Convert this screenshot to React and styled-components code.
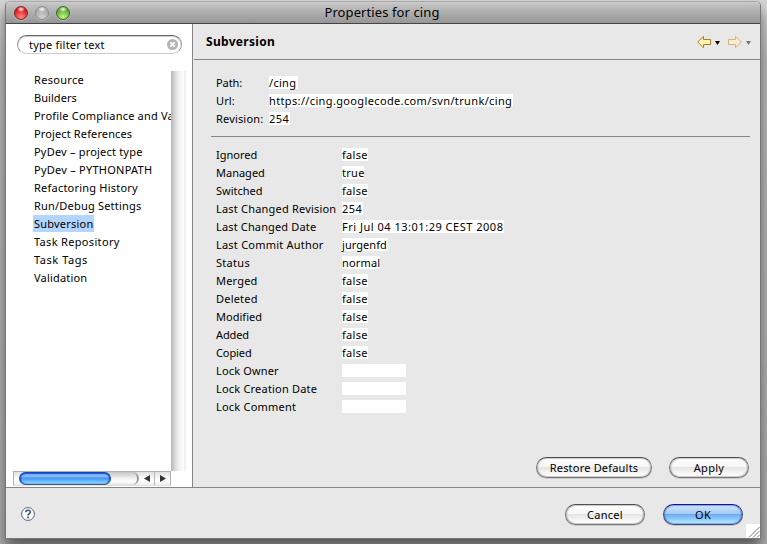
import React from "react";
import styled, { createGlobalStyle, css } from "styled-components";

const Global = createGlobalStyle`
  * { box-sizing: border-box; }
  html, body { margin: 0; padding: 0; overflow: hidden; }
  body { font: 11px/18px "Noto Sans", "Open Sans", sans-serif; color: #000; }
`;

const Desktop = styled.div`
  width: 767px;
  height: 544px;
  padding: 1px 6px 5px 5px;
  background: linear-gradient(#d6d6d6, #bebebe 60px, #b4b4b4 400px, #b0b0b0);
`;

const Window = styled.div`
  width: 756px;
  height: 538px;
  display: flex;
  flex-direction: column;
  border: 1px solid #777;
  border-top-color: #a8a8a8;
  border-radius: 5px 5px 0 0;
  background: #e8e8e8;
  box-shadow: 0 9px 14px rgba(0, 0, 0, 0.5);
  overflow: hidden;
`;

const TitleBar = styled.header`
  height: 22px;
  flex: none;
  display: grid;
  grid-template-columns: 100px 1fr 102px;
  align-items: center;
  border-bottom: 1px solid #444;
  background: linear-gradient(#d0d0d0, #c2c2c2 2px, #969696);
`;

const Lights = styled.div`
  display: flex;
  gap: 7px;
  padding-left: 8px;
`;

const Light = styled.span`
  width: 14px;
  height: 14px;
  border-radius: 50%;
  border: 1px solid ${(p) => p.$edge};
  background:
    radial-gradient(ellipse 4px 3px at 50% 18%, rgba(255, 255, 255, 0.95), rgba(255, 255, 255, 0) 100%),
    radial-gradient(circle at 50% 85%, ${(p) => p.$glow}, ${(p) => p.$fill} 70%);
  box-shadow: 0 1px 0 rgba(255, 255, 255, 0.35);
`;

const Title = styled.h1`
  margin: 0;
  font-size: 13px;
  font-weight: 400;
  line-height: 18px;
  padding-bottom: 2px;
  text-align: center;
  letter-spacing: 0.1px;
`;

const Main = styled.div`
  flex: none;
  height: 464px;
  display: flex;
  border-bottom: 1px solid #868686;
`;

const Sidebar = styled.aside`
  width: 187px;
  flex: none;
  display: flex;
  flex-direction: column;
  border-right: 1px solid #868686;
  background: #fff;
`;

const Search = styled.div`
  display: flex;
  align-items: center;
  justify-content: space-between;
  flex: none;
  width: 165px;
  height: 19px;
  margin: 11px 0 17px 11px;
  padding: 0 3px 0 11px;
  border: 1px solid #999;
  border-top-color: #666;
  border-bottom-color: #ccc;
  border-radius: 10px;
  box-shadow: inset 0 1px 1px #ccc;
  letter-spacing: 0.22px;
`;

const ListArea = styled.div`
  display: flex;
  height: 400px;
  flex: none;
`;

const List = styled.ul`
  width: 165px;
  height: 400px;
  margin: 0;
  padding: 0 0 0 27px;
  list-style: none;
  overflow: hidden;
`;

const Item = styled.li`
  height: 18px;
  white-space: nowrap;
`;

const ItemLabel = styled.span`
  display: inline-block;
  height: 17px;
  line-height: 18px;
  padding: 0 1px;
  vertical-align: top;
  letter-spacing: ${(p) => p.$ls ?? 0.3}px;
  background: ${(p) => (p.$selected ? "#b4d5fe" : "transparent")};
`;

const VTrack = styled.div`
  width: 15px;
  height: 400px;
  background: linear-gradient(90deg, #b5b5b5, #d8d8d8 4px, #f2f2f2 8px, #fcfcfc 13px, #f2f2f2 13px);
`;

const HScroll = styled.div`
  display: flex;
  width: 158px;
  height: 15px;
  margin-left: 7px;
  border: 1px solid #b0b0b0;
  border-bottom-color: #e2e2e2;
  background: linear-gradient(#e0e0e0, #fff 60%, #eee);
`;

const HTrack = styled.div`
  width: 120px;
  height: 13px;
  margin-left: 5px;
  border-radius: 7px;
  border-right: 2px solid #999;
  background: linear-gradient(#c4c4c4, #efefef 45%, #fff 75%, #ddd);
`;

const HThumb = styled.div`
  width: 92px;
  height: 13px;
  border: 1px solid #1546b4;
  border-bottom-color: #46566e;
  border-radius: 7px;
  box-shadow: inset 0 1px 0 #1958d8, inset 1px 0 1px #1958c8, inset -1px 0 1px #1958c8;
  background: linear-gradient(#6fa8f0, #8abcf5 35%, #3f8ff0 45%, #6dbcff 75%, #8fd8ff);
`;

const ArrowCell = styled.div`
  width: ${(p) => p.$w}px;
  height: 13px;
  display: flex;
  align-items: center;
  justify-content: center;
  ${(p) => p.$divider && css`border-left: 1px solid #b8b8b8;`}
`;

const Page = styled.main`
  flex: 1;
  display: flex;
  flex-direction: column;
`;

const PageHeader = styled.div`
  display: flex;
  justify-content: space-between;
  align-items: center;
  height: 36px;
  flex: none;
  margin-left: 1px;
  padding: 0 9px 0 12px;
  border-bottom: 1px solid #868686;
`;

const PageTitle = styled.h2`
  margin: 0;
  font-size: 12px;
  font-weight: 700;
  letter-spacing: 0.3px;
`;

const Nav = styled.div`
  display: flex;
  align-items: center;
  margin-top: 1px;
`;

const Fields = styled.dl`
  display: grid;
  grid-template-columns: ${(p) => p.$label}px 1fr;
  grid-auto-rows: 18px;
  margin: ${(p) => p.$top}px 0 0 23px;
`;

const Term = styled.dt`
  white-space: nowrap;
  line-height: 18px;
  letter-spacing: ${(p) => p.$ls ?? 0.3}px;
`;

const Value = styled.dd`
  margin: 2px 0 0;
  justify-self: start;
  height: 13px;
  line-height: 14px;
  width: ${(p) => p.$w}px;
  white-space: nowrap;
  letter-spacing: ${(p) => p.$ls ?? 0.3}px;
  background: #fff;
`;

const Rule = styled.hr`
  width: 539px;
  height: 1px;
  flex: none;
  margin: 8px 0 0 18px;
  border: 0;
  background: #868686;
`;

const Actions = styled.div`
  display: flex;
  justify-content: flex-end;
  gap: ${(p) => p.$gap}px;
  padding: ${(p) => p.$pad};
`;

const PageActions = styled(Actions)`
  margin-top: auto;
`;

const Button = styled.button`
  width: ${(p) => p.$w}px;
  height: 21px;
  padding: 0;
  border: 1px solid #777;
  border-top-color: #505050;
  border-radius: 11px;
  font: inherit;
  line-height: 18px;
  letter-spacing: ${(p) => p.$ls ?? 0.3}px;
  color: #000;
  background: linear-gradient(#fff, #f6f6f6 45%, #e5e5e5 50%, #fff 95%);
  box-shadow: inset 0 0 1px 1px rgba(0, 0, 0, 0.22), 0 1px 0 rgba(0, 0, 0, 0.12);
  ${(p) => p.$primary && css`
    border-color: #3c4b82;
    border-top-color: #15158c;
    background: linear-gradient(#d2e4fa, #a5cbf5 45%, #6eacf0 50%, #8fccfc 75%, #c4f6ff);
    box-shadow: inset 0 0 1px 1px rgba(20, 60, 190, 0.4), 0 1px 0 rgba(0, 0, 0, 0.15);
  `}
`;

const Footer = styled.footer`
  position: relative;
  flex: 1;
  display: flex;
  align-items: flex-start;
  justify-content: space-between;
  padding-left: 15px;
`;

const HelpIcon = styled.svg`
  margin-top: 19px;
`;

const Grip = styled.svg`
  position: absolute;
  right: 0;
  bottom: 0;
`;

const items = [
  ["Resource"],
  ["Builders", 0.05],
  ["Profile Compliance and Va", 0.2],
  ["Project References", 0.13],
  ["PyDev – project type", 0.2],
  ["PyDev – PYTHONPATH", 0.25],
  ["Refactoring History", 0.22],
  ["Run/Debug Settings", 0.2],
  ["Subversion", 0.22],
  ["Task Repository", 0.33],
  ["Task Tags", 0.55],
  ["Validation", 0.18],
];

const location = [
  ["Path:", "/cing", 29, -0.1],
  ["Url:", "https://cing.googlecode.com/svn/trunk/cing", 244, 0.1, 0.36],
  ["Revision:", "254", 21, 0.17, 0.5],
];

const status = [
  ["Ignored", "false", 26, 0],
  ["Managed", "true", 22, 0],
  ["Switched", "false", 26, 0],
  ["Last Changed Revision", "254", 21, 0.2, 0.5],
  ["Last Changed Date", "Fri Jul 04 13:01:29 CEST 2008", 162, 0.15, 0.51],
  ["Last Commit Author", "jurgenfd", 46, 0.22, 0.05],
  ["Status", "normal", 38, 0.3, 0.15],
  ["Merged", "false", 26, 0.2],
  ["Deleted", "false", 26, 0.2],
  ["Modified", "false", 26, 0.03],
  ["Added", "false", 26, -0.1],
  ["Copied", "false", 26, -0.1],
  ["Lock Owner", "", 64, 0.15],
  ["Lock Creation Date", "", 64, 0.2],
  ["Lock Comment", "", 64, 0.22],
];

function FieldRows({ rows }) {
  return rows.map(([label, value, w, ls, vls]) => (
    <React.Fragment key={label}>
      <Term $ls={ls}>{label}</Term>
      <Value $w={w} $ls={vls}>{value}</Value>
    </React.Fragment>
  ));
}

function HistoryArrow({ forward }) {
  return (
    <svg width="14" height="12" viewBox="0 0 14 12">
      <path
        transform={forward ? "translate(14 0) scale(-1 1)" : undefined}
        d="M.7 6 5.5 1.2 6.5 .5V3.5H13.5V8.5H6.5V11.5L5.5 10.8Z"
        fill={forward ? "#f5ecd2" : "#fff3b8"}
        stroke={forward ? "#d3b57c" : "#b67a10"}
      />
    </svg>
  );
}

const Caret = styled.svg`
  margin: 1px ${(p) => p.$right}px 0 4px;
`;

export default function App() {
  return (
    <Desktop>
      <Global />
      <Window>
        <TitleBar>
          <Lights>
            <Light $edge="#7c2a2a" $fill="#d8151c" $glow="#ff8a84" />
            <Light $edge="#8c8c8c" $fill="#a9a9a9" $glow="#cfcfcf" />
            <Light $edge="#3e6a28" $fill="#58a82c" $glow="#c4f486" />
          </Lights>
          <Title>Properties for cing</Title>
        </TitleBar>
        <Main>
          <Sidebar>
            <Search>
              type filter text
              <svg width="11" height="11" viewBox="0 0 11 11">
                <circle cx="5.5" cy="5.5" r="5.5" fill="#b4b4b4" />
                <path d="M3.3 3.3 7.7 7.7M7.7 3.3 3.3 7.7" stroke="#fff" strokeWidth="1.7" />
              </svg>
            </Search>
            <ListArea>
              <List>
                {items.map(([name, ls]) => (
                  <Item key={name}>
                    <ItemLabel $ls={ls} $selected={name === "Subversion"}>{name}</ItemLabel>
                  </Item>
                ))}
              </List>
              <VTrack />
            </ListArea>
            <HScroll>
              <HTrack><HThumb /></HTrack>
              <ArrowCell $w={15}>
                <svg width="6" height="7"><path d="M6 0V7L0 3.5Z" fill="#333" /></svg>
              </ArrowCell>
              <ArrowCell $w={16} $divider>
                <svg width="6" height="7"><path d="M0 0V7L6 3.5Z" fill="#333" /></svg>
              </ArrowCell>
            </HScroll>
          </Sidebar>
          <Page>
            <PageHeader>
              <PageTitle>Subversion</PageTitle>
              <Nav>
                <HistoryArrow />
                <Caret width="5" height="4" $right={8}><path d="M0 0H5L2.5 4Z" /></Caret>
                <HistoryArrow forward />
                <Caret width="5" height="4" $right={0}><path d="M0 0H5L2.5 4Z" fill="#777" /></Caret>
              </Nav>
            </PageHeader>
            <Fields $label={53} $top={14}><FieldRows rows={location} /></Fields>
            <Rule />
            <Fields $label={126} $top={9}><FieldRows rows={status} /></Fields>
            <PageActions $gap={17} $pad="0 11px 9px 0">
              <Button $w={116} $ls={0.2}>Restore Defaults</Button>
              <Button $w={80}>Apply</Button>
            </PageActions>
          </Page>
        </Main>
        <Footer>
          <HelpIcon width="14" height="14" viewBox="0 0 14 14">
            <circle cx="7" cy="7" r="6.4" fill="#fff" stroke="#50608a" />
            <path d="M4.8 5.2C4.8 2.6 9.3 2.6 9.3 5.1 9.3 6.7 7 6.7 7 8.6" fill="none" stroke="#3a4d80" strokeWidth="1.6" />
            <rect x="6.1" y="9.6" width="1.8" height="1.7" fill="#3a4d80" />
          </HelpIcon>
          <Actions $gap={18} $pad="16px 17px 0 0">
            <Button $w={80}>Cancel</Button>
            <Button $w={80} $primary>OK</Button>
          </Actions>
          <Grip width="14" height="14" viewBox="0 0 14 14">
            <rect width="14" height="14" fill="#fff" />
            <path d="M3 13.5 13.5 3M7 13.5 13.5 7M11 13.5 13.5 11" stroke="#777" strokeWidth="1" />
          </Grip>
        </Footer>
      </Window>
    </Desktop>
  );
}
